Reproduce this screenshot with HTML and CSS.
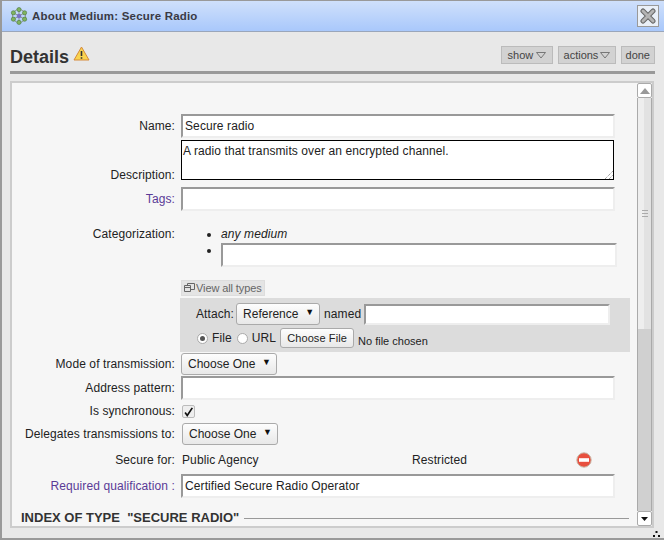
FILE: index.html
```html
<!DOCTYPE html>
<html>
<head>
<meta charset="utf-8">
<title>About Medium: Secure Radio</title>
<link rel="stylesheet" href="styles.css">
</head>
<body>
<div class="window">
  <header class="titlebar">
    <svg class="logo" width="18" height="18" viewBox="0 0 18 18">
      <g fill="none" stroke="#8a9a86" stroke-width="1"><circle cx="9" cy="9" r="6.5"/><path d="M9 3v12M3.4 5.8l11.2 6.4M14.6 5.8 3.4 12.2"/></g>
      <g fill="#7fb55e" stroke="#4d7440" stroke-width=".6">
        <circle cx="9" cy="2.6" r="2.1"/><circle cx="9" cy="15.4" r="2.1"/><circle cx="3.4" cy="5.8" r="2.1"/><circle cx="14.6" cy="5.8" r="2.1"/><circle cx="3.4" cy="12.2" r="2.1"/><circle cx="14.6" cy="12.2" r="2.1"/>
      </g>
      <circle cx="9" cy="9" r="2.3" fill="#7a72c4"/>
    </svg>
    <span class="title">About Medium: Secure Radio</span>
    <button class="close" aria-label="Close">
      <svg width="16" height="16" viewBox="0 0 16 16"><path d="M3 3 13 13M13 3 3 13" stroke="#666" stroke-width="5" stroke-linecap="round"/><path d="M3 3 13 13M13 3 3 13" stroke="#b4b4b4" stroke-width="3" stroke-linecap="round"/></svg>
    </button>
  </header>
  <div class="head">
    <h1 class="heading">Details</h1>
    <svg class="warn" width="17" height="15" viewBox="0 0 17 15"><path d="M8.5 1 16 14H1Z" fill="#f9d44f" stroke="#d58a3a" stroke-linejoin="round"/><path d="M8.5 5v5M8.5 11.2v1.6" stroke="#333" stroke-width="1.6"/></svg>
    <div class="actions">
      <span class="tool tool-show">show<svg class="tri" width="10" height="7" viewBox="0 0 10 7"><path d="M.5.5h9L5 6Z" fill="none" stroke="#777"/></svg></span>
      <span class="tool tool-actions">actions<svg class="tri" width="10" height="7" viewBox="0 0 10 7"><path d="M.5.5h9L5 6Z" fill="none" stroke="#777"/></svg></span>
      <span class="tool">done</span>
    </div>
  </div>
  <main class="panel">
    <form class="form">
      <div class="row row-name"><label class="lbl">Name:</label><div class="field">Secure radio</div></div>
      <div class="row row-desc"><label class="lbl lbl-desc">Description:</label>
        <div class="textarea">A radio that transmits over an encrypted channel.
          <svg class="grip" width="8" height="8" viewBox="0 0 8 8"><path d="M0 8 8 0M4 8 8 4" stroke="#777" stroke-dasharray="1 1"/></svg>
        </div>
      </div>
      <div class="row row-tags"><label class="lbl link">Tags:</label><div class="field"></div></div>
      <div class="row row-cat"><label class="lbl">Categorization:</label>
        <ul class="cats">
          <li class="cat-any">any medium</li>
          <li><div class="field field-cat"></div></li>
        </ul>
      </div>
      <div class="view-wrap"><span class="viewall"><svg width="11" height="10" viewBox="0 0 11 10"><path d="M.5 2.5h6v6h-6ZM3.5 2.5v-2h7v6h-4M.5 4.5h6" fill="none" stroke="#666"/></svg>View all types</span></div>
      <div class="attach">
        <div class="attach-line">
          <span>Attach:</span>
          <span class="select sel-ref">Reference<i class="arrow">▼</i></span>
          <span>named</span>
          <div class="field field-named"></div>
        </div>
        <div class="attach-line line-file">
          <span class="radio on"></span><span>File</span>
          <span class="radio"></span><span>URL</span>
          <span class="filebtn">Choose File</span>
          <span class="nofile">No file chosen</span>
        </div>
      </div>
      <div class="row row-mode"><label class="lbl">Mode of transmission:</label><span class="select">Choose One<i class="arrow">▼</i></span></div>
      <div class="row row-addr"><label class="lbl">Address pattern:</label><div class="field"></div></div>
      <div class="row row-sync"><label class="lbl">Is synchronous:</label>
        <span class="check"><svg width="13" height="13" viewBox="0 0 13 13"><path d="M2.5 6.5 5 10 11 1" fill="none" stroke="#111" stroke-width="2"/></svg></span>
      </div>
      <div class="row row-del"><label class="lbl">Delegates transmissions to:</label><span class="select sel-del">Choose One<i class="arrow">▼</i></span></div>
      <div class="row row-sec"><label class="lbl">Secure for:</label>
        <span class="sec-a">Public Agency</span><span class="sec-b">Restricted</span>
        <svg class="minus" width="16" height="16" viewBox="0 0 16 16"><circle cx="8" cy="8" r="7.2" fill="#e8503f" stroke="#c9b7a8"/><rect x="3" y="6.2" width="10" height="3.6" fill="#fff"/></svg>
      </div>
      <div class="row row-qual"><label class="lbl link">Required qualification :</label><div class="field">Certified Secure Radio Operator</div></div>
      <div class="index"><span>INDEX OF TYPE &nbsp;"SECURE RADIO"</span><hr class="rule"></div>
    </form>
    <div class="scroll">
      <div class="sb-btn"><svg width="10" height="6" viewBox="0 0 10 6"><path d="M5 0 10 6H0Z" fill="#999"/></svg></div>
      <div class="sb-track"><div class="sb-thumb"><span></span><span></span><span></span></div></div>
      <div class="sb-btn"><svg width="7" height="4" viewBox="0 0 7 4"><path d="M0 0H7L3.5 4Z" fill="#111"/></svg></div>
    </div>
  </main>
  <svg class="resize" width="7" height="6" viewBox="0 0 7 6"><path d="M2.5 0h2v2h-2ZM0 4h2v2H0ZM5 4h2v2H5Z" fill="#111"/></svg>
</div>
</body>
</html>
```
FILE: styles.css
```css
* { box-sizing: border-box; }
html, body { margin: 0; padding: 0; }
body { width: 664px; height: 540px; overflow: hidden; font: 12px/14px "Liberation Sans", Arial, sans-serif; letter-spacing: .1px; color: #222; }
.window { position: relative; width: 664px; height: 540px; background: #e8e8e8; border: solid #999; border-width: 1px 0 2px 2px; display: flex; flex-direction: column; }
.titlebar { height: 31px; flex: none; display: flex; align-items: center; padding-left: 8px; background: linear-gradient(#cfe0fb, #a9c8fb); border-bottom: 1px solid #9aa6ba; }
.logo { flex: none; }
.title { margin-left: 4px; font-weight: bold; font-size: 11.5px; color: #3a3a44; letter-spacing: .2px; }
.close { margin-left: auto; margin-right: 5px; width: 22px; height: 22px; padding: 2px; background: #eaf0f8; border: 1px solid #999; display: flex; }
.head { height: 42px; flex: none; margin: 0 9px 0 8px; border-bottom: 3px solid #999; display: flex; align-items: flex-start; }
.heading { margin: 13px 0 0; font-size: 18px; line-height: 24px; font-weight: bold; color: #333; letter-spacing: 0; }
.warn { margin: 14px 0 0 4px; }
.actions { margin-left: auto; margin-top: 14px; display: flex; gap: 5px; }
.tool { height: 18px; padding: 2px 4px; background: #d2d2d2; border: 1px solid #bbb; font-size: 11px; line-height: 13px; color: #444; letter-spacing: 0; display: flex; align-items: center; }
.tool-show { width: 52px; padding: 2px 6px; justify-content: space-between; }
.tool-actions { width: 58px; padding: 2px 5px; gap: 2px; }
.tri { flex: none; }
.panel { position: relative; margin: 7px 0 0 8px; width: 644px; height: 447px; background: #f6f6f6; border: 2px solid #ccc; overflow: hidden; }
.form { padding-top: 31px; }
.row { display: flex; align-items: center; margin-bottom: 2px; }
.lbl { width: 163px; flex: none; text-align: right; margin-right: 6px; color: #222; white-space: nowrap; }
.lbl.link { color: #5a3a96; }
.lbl-desc { margin-bottom: -2px; }
.field { width: 434px; height: 24px; background: #fff; border: 2px solid; border-color: #999 #eee #eee #999; padding: 3px 2px; color: #222; }
.row-desc { align-items: flex-end; margin-bottom: 7px; }
.textarea { position: relative; width: 433px; height: 40px; background: #fff; border: 1px solid #000; padding: 3px 1px 0; }
.grip { position: absolute; right: 0; bottom: 0; }
.row-cat { align-items: flex-start; margin: 16px 0 0; height: 40px; }
.cats { margin: 0; padding: 0 0 0 40px; width: 440px; }
.cats li { list-style: disc; }
.cat-any { font-style: italic; height: 16px; }
.row-tags { margin-bottom: 0; }
.field-cat { width: 396px; }
.view-wrap { margin: 13px 0 0 169px; height: 16px; display: flex; }
.viewall { height: 16px; padding: 0 2px; background: #e4e4e4; border: 1px solid #ddd; color: #666; font-size: 11px; line-height: 14px; display: flex; align-items: center; gap: 1px; letter-spacing: -.1px; }
.attach { margin: 2px 0 0 168px; width: 450px; height: 54px; background: #dcdcdc; padding: 5px 0 0 16px; }
.attach-line { display: flex; align-items: center; gap: 3px; height: 22px; }
.line-file { margin-top: 2px; height: 22px; gap: 4px; }
.field-named { width: 246px; height: 21px; }
.select { display: inline-flex; align-items: center; justify-content: space-between; width: 96px; height: 22px; padding: 0 5px 1px 6px; background: linear-gradient(#fdfdfd, #e8e8e8); border: 1px solid #aaa; border-radius: 3px; color: #222; letter-spacing: 0; }
.sel-ref { width: 84px; margin: 0 1px 0 -1px; }
.sel-del { margin-left: 1px; }
.arrow { font-style: normal; font-size: 9px; margin-top: -3px; color: #111; }
.radio { width: 11px; height: 11px; margin-left: 1px; border: 1px solid #aaa; border-radius: 50%; background: #fff; position: relative; }
.radio.on::after { content: ""; position: absolute; left: 2px; top: 2px; width: 5px; height: 5px; border-radius: 50%; background: #555; }
.filebtn { height: 20px; width: 74px; justify-content: center; font-size: 11px; margin-left: 0; background: linear-gradient(#fdfdfd, #e8e8e8); border: 1px solid #aaa; border-radius: 3px; display: flex; align-items: center; letter-spacing: .1px; }
.nofile { position: relative; top: 3px; font-size: 11px; letter-spacing: 0; }
.row-mode { margin: 1px 0 1px; height: 22px; }
.row-addr { margin-bottom: 0; }
.row-sync { height: 14px; margin: 4px 0 5px; }
.check { width: 13px; height: 13px; margin-left: 1px; border: 1px solid #bbb; background: #eee; border-radius: 2px; display: flex; }
.row-del { height: 22px; margin: 0; }
.row-sec { height: 16px; margin: 7px 0 6px; }
.sec-a { width: 231px; padding-left: 1px; }
.sec-b { width: 164px; }
.row-qual { margin-bottom: 0; }
.index { display: flex; align-items: center; margin: 13px 0 0 9px; width: 608px; font-size: 13px; font-weight: bold; color: #333; letter-spacing: 0; }
.index span { white-space: nowrap; }
.rule { flex: 1; margin: 0 0 0 5px; border: 0; border-top: 1px solid #999; }
.scroll { position: absolute; top: 0; right: 0; width: 15px; height: 100%; display: flex; flex-direction: column; }
.sb-btn { height: 15px; flex: none; background: #fff; border: 1px solid #aaa; border-radius: 2px; display: flex; align-items: center; justify-content: center; }
.sb-track { flex: 1; background: #d0d0d0; border: solid #aaa; border-width: 0 1px; }
.sb-thumb { height: 231px; background: linear-gradient(90deg, #eee 50%, #e2e2e2 50%); display: flex; flex-direction: column; align-items: center; justify-content: center; gap: 2px; }
.sb-thumb span { width: 6px; height: 1px; background: #aaa; }
.resize { position: absolute; right: 4px; bottom: 1px; }
```
